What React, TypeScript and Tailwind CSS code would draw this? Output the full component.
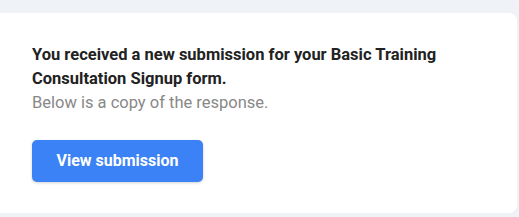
export default function App() {
  return (
    <main className="min-h-screen bg-[#eff3f8] pt-[13px] pb-[4px] pr-[2px] font-['Roboto',sans-serif]">
      <div className="bg-white rounded-r-lg -ml-2 pl-10 pt-[30px] pb-[32px] h-[200px]">
        <h1 className="text-[16.5px] leading-[24px] font-bold text-[#222]">
          You received a new submission for your Basic Training
          <br />
          Consultation Signup form.
        </h1>
        <p className="text-[16.5px] leading-[24px] text-[#888]">
          Below is a copy of the response.
        </p>
        <button className="mt-[25px] w-[171px] h-[42px] rounded-[5px] bg-[#3b82f6] text-white text-[16px] font-bold shadow-[0_1px_3px_rgba(0,0,0,0.18)]">
          View submission
        </button>
      </div>
    </main>
  );
}
